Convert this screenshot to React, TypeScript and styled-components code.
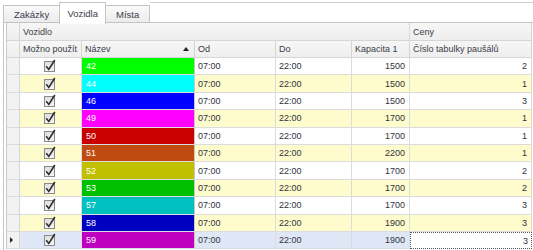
import styled, { createGlobalStyle } from 'styled-components';

type Vehicle = { name: string; color: string; cap: number; table: number };

const vehicles: Vehicle[] = [
  { name: '42', color: '#00ff00', cap: 1500, table: 2 },
  { name: '44', color: '#00ffff', cap: 1500, table: 1 },
  { name: '46', color: '#0000ff', cap: 1500, table: 3 },
  { name: '49', color: '#ff00ff', cap: 1700, table: 1 },
  { name: '50', color: '#c80000', cap: 1700, table: 1 },
  { name: '51', color: '#c04a10', cap: 2200, table: 1 },
  { name: '52', color: '#c0c000', cap: 1700, table: 2 },
  { name: '53', color: '#00c000', cap: 1700, table: 2 },
  { name: '57', color: '#00c0c0', cap: 1700, table: 3 },
  { name: '58', color: '#0000c0', cap: 1900, table: 3 },
  { name: '59', color: '#c000c0', cap: 1900, table: 3 },
];

const COLS = '13px 62px 113px 81px 76px 58px 122px';

const GlobalStyle = createGlobalStyle`
  body {
    margin: 0;
    background: #ffffff;
    font-family: "Liberation Sans", Arial, sans-serif;
    font-size: 9px;
    color: #303340;
  }
`;

function CheckIcon() {
  return (
    <svg width='13' height='14' viewBox='0 0 13 14'>
      <defs>
        <linearGradient id='cbg' x1='0' y1='0' x2='0' y2='1'>
          <stop offset='0' stopColor='#dedede' />
          <stop offset='1' stopColor='#f7f7f7' />
        </linearGradient>
      </defs>
      <rect x='0.5' y='2.5' width='10' height='10' fill='url(#cbg)' stroke='#8a8a8a' />
      <path d='M2.2 7.2 L4.8 10.4 L10.8 1' fill='none' stroke='#2e2e2e' strokeWidth='1.6' />
    </svg>
  );
}

export default function App() {
  return (
    <Page>
      <GlobalStyle />
      <TabStrip>
        <Tab>Zakázky</Tab>
        <Tab $active>Vozidla</Tab>
        <Tab>Místa</Tab>
        <TabFiller />
      </TabStrip>
      <TabPage>
        <Grid>
          <HeadRow>
            <HeadCell />
            <HeadCell $span={5}>Vozidlo</HeadCell>
            <HeadCell>Ceny</HeadCell>
          </HeadRow>
          <HeadRow $small>
            <HeadCell />
            <HeadCell>Možno použít</HeadCell>
            <HeadCell>
              Název
              <SortArrow />
            </HeadCell>
            <HeadCell>Od</HeadCell>
            <HeadCell>Do</HeadCell>
            <HeadCell>Kapacita 1</HeadCell>
            <HeadCell>Číslo tabulky paušálů</HeadCell>
          </HeadRow>
          {vehicles.map((v, i) => {
            const selected = i === vehicles.length - 1;
            const bg = selected ? '#dfe7f6' : i % 2 === 1 ? '#fefbcc' : '#ffffff';
            return (
              <Row key={v.name}>
                <Indicator>{selected && <RowMarker />}</Indicator>
                <Cell $bg={bg} $center>
                  <CheckIcon />
                </Cell>
                <ColorCell style={{ background: v.color }}>{v.name}</ColorCell>
                <Cell $bg={bg}>07:00</Cell>
                <Cell $bg={bg}>22:00</Cell>
                <Cell $bg={bg} $right>
                  {v.cap}
                </Cell>
                {selected ? (
                  <FocusCell>{v.table}</FocusCell>
                ) : (
                  <Cell $bg={bg} $right>
                    {v.table}
                  </Cell>
                )}
              </Row>
            );
          })}
        </Grid>
      </TabPage>
    </Page>
  );
}

const Page = styled.div`
  width: 533px;
  height: 250px;
  overflow: hidden;
  background: #ffffff;
`;
const TabStrip = styled.div`
  display: flex;
  align-items: flex-end;
  height: 23px;
  padding-left: 3px;
  box-sizing: border-box;
`;
const Tab = styled.div<{ $active?: boolean }>`
  height: ${p => (p.$active ? '22px' : '18px')};
  padding: 0 ${p => (p.$active ? '7px' : '10px')};
  margin-bottom: ${p => (p.$active ? '-1px' : '0')};
  margin-right: -1px;
  display: flex;
  align-items: center;
  box-sizing: border-box;
  border: 1px solid #c4c4c4;
  border-bottom: ${p => (p.$active ? 'none' : '1px solid #c4c4c4')};
  background: ${p => (p.$active ? '#ffffff' : 'linear-gradient(#fafafa, #ececec)')};
  color: #3c3c4a;
  font-size: 9.5px;
  position: relative;
  z-index: ${p => (p.$active ? 2 : 1)};
`;
const TabFiller = styled.div`
  flex: 1;
  align-self: stretch;
  margin-top: 2px;
  margin-left: 1px;
  border-top: 1px solid #cfcfcf;
  border-bottom: 1px solid #c4c4c4;
`;
const TabPage = styled.div`
  border-left: 1px solid #c4c4c4;
  margin-left: 3px;
  padding-left: 2px;
  height: 227px;
`;
const Grid = styled.div`
  border-left: 1px solid #c9c9c9;
  width: 526px;
`;
const HeadRow = styled.div<{ $small?: boolean }>`
  display: grid;
  grid-template-columns: ${COLS};
  height: ${p => (p.$small ? '17px' : '18px')};
`;
const HeadCell = styled.div<{ $span?: number }>`
  grid-column: span ${p => p.$span ?? 1};
  display: flex;
  align-items: center;
  padding-left: 3px;
  box-sizing: border-box;
  background: linear-gradient(#f6f6f6, #eeeeee);
  border-right: 1px solid #d6d6d6;
  border-bottom: 1px solid #d6d6d6;
  color: #3a3c48;
  white-space: nowrap;
  overflow: hidden;
`;
const SortArrow = styled.span`
  margin-left: auto;
  margin-right: 5px;
  width: 0;
  height: 0;
  border-left: 3px solid transparent;
  border-right: 3px solid transparent;
  border-bottom: 4px solid #222;
`;
const Row = styled.div`
  display: grid;
  grid-template-columns: ${COLS};
  height: 17.4px;
`;
const Indicator = styled.div`
  display: flex;
  align-items: center;
  justify-content: center;
  background: #f1f2f4;
  border-right: 1px solid #d6d6d6;
  border-bottom: 1px solid #dcdcdc;
  box-sizing: border-box;
`;
const RowMarker = styled.span`
  width: 0;
  height: 0;
  border-top: 3px solid transparent;
  border-bottom: 3px solid transparent;
  border-left: 3px solid #222;
  margin-right: 3px;
`;
const Cell = styled.div<{ $bg: string; $right?: boolean; $center?: boolean }>`
  display: flex;
  align-items: center;
  justify-content: ${p => (p.$center ? 'center' : p.$right ? 'flex-end' : 'flex-start')};
  padding: ${p => (p.$right ? '0 4px 0 0' : p.$center ? '0' : '0 0 0 3px')};
  box-sizing: border-box;
  background: ${p => p.$bg};
  border-right: 1px solid #dcdcdc;
  border-bottom: 1px solid #dcdcdc;
  white-space: nowrap;
`;
const ColorCell = styled.div`
  display: flex;
  align-items: center;
  padding-left: 4px;
  box-sizing: border-box;
  color: #ffffff;
  border-right: 1px solid #c8c8c8;
  border-bottom: 1px solid #dcdcdc;
`;
const FocusCell = styled.div`
  display: flex;
  align-items: center;
  justify-content: flex-end;
  padding-right: 3px;
  box-sizing: border-box;
  background: #ffffff;
  border: 1px dotted #555;
  border-right: 1px dotted #555;
`;
